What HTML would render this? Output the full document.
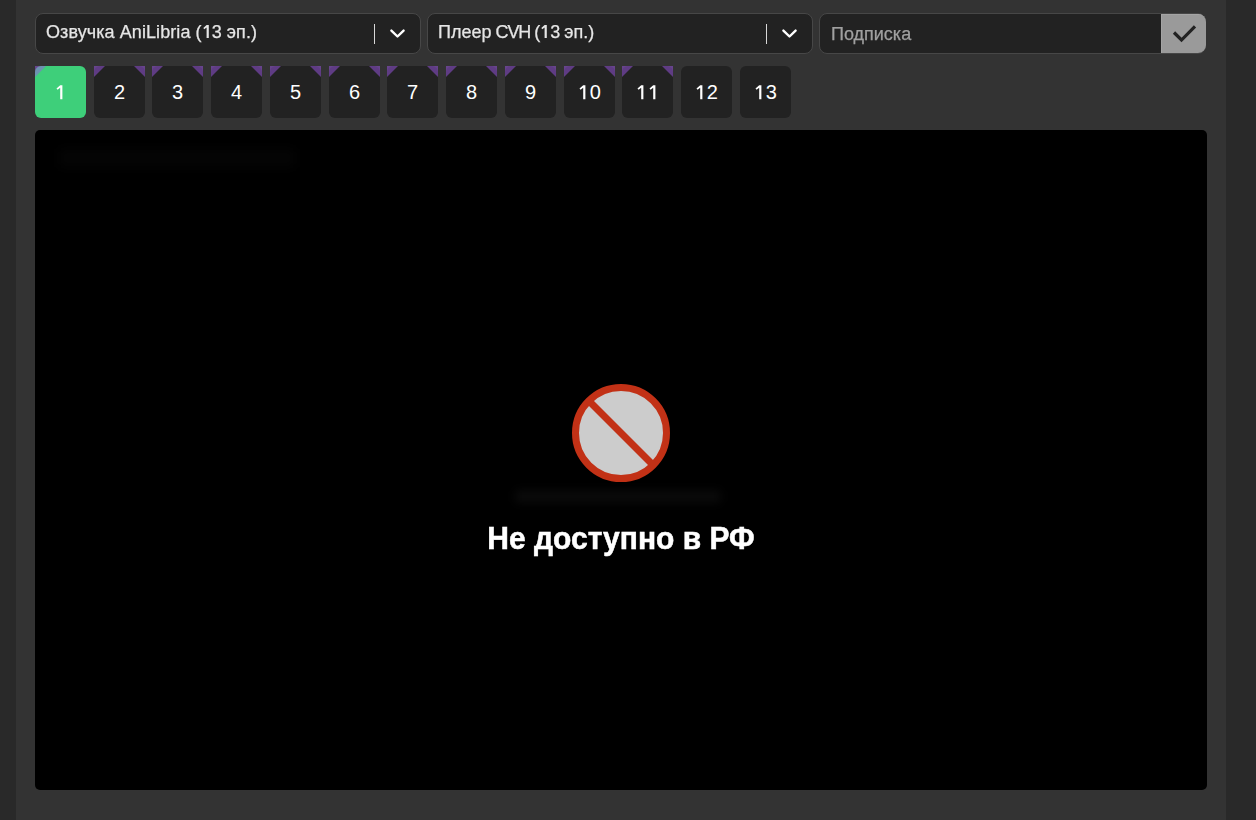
<!DOCTYPE html>
<html><head><meta charset="utf-8">
<style>
html,body{margin:0;padding:0;}
.txt,.ph{will-change:transform;}
.txt,.ph{-webkit-text-stroke:0.25px currentColor;}
body{width:1256px;height:820px;background:#292929;position:relative;overflow:hidden;font-family:"Liberation Sans",sans-serif;}
.panel{position:absolute;left:16px;top:0;width:1210px;height:820px;background:#333333;}
.sel{position:absolute;top:13px;height:41px;box-sizing:border-box;border:1px solid #474747;border-radius:8px;background:#222;}
.sel .txt{position:absolute;left:10px;top:7px;font-size:18px;line-height:22px;color:#e6e6e6;white-space:nowrap;}
.sel .sep{position:absolute;width:1px;top:10px;height:20px;background:#d8d8d8;}
.sel > svg{position:absolute;top:14px;}
.inp{position:absolute;left:819px;top:13px;width:387px;height:41px;box-sizing:border-box;border:1px solid #474747;border-radius:8px;background:#222;}
.inp .ph{position:absolute;left:11px;top:9px;font-size:18px;line-height:22px;color:#a0a0a0;white-space:nowrap;}
.inp .btn{position:absolute;right:-1px;top:0;width:45px;height:39px;background:#9a9a9a;border-radius:0 8px 8px 0;box-shadow:inset 1px 1px 0 #a4a4a4;}
.ep{position:absolute;top:66px;width:51px;height:52px;border-radius:6px;background:#222;color:#fff;font-size:20px;line-height:52px;text-align:center;}
.ep.act{background:#3ecf7a;}
.one{display:inline-block;vertical-align:-0.8px;}
.one18{display:inline-block;vertical-align:0;}
.tl,.tr{position:absolute;top:0;width:0;height:0;}
.tl{left:0;border-top:11px solid rgba(155,85,230,.5);border-right:11px solid transparent;}
.tr{right:0;border-top:11px solid rgba(155,85,230,.5);border-left:11px solid transparent;}
.video{position:absolute;left:35px;top:130px;width:1172px;height:660px;background:#000;border-radius:5px;}
.msg{position:absolute;left:0;width:1172px;top:392px;text-align:center;color:#fff;font-weight:bold;font-size:30px;line-height:34px;transform:scaleY(1.07);transform-origin:50% 27px;-webkit-text-stroke:0.5px #fff;}
</style></head><body>
<div class="panel"></div>

<div class="sel" style="left:35px;width:386px;">
  <div class="txt" style="letter-spacing:0.08px">Озвучка AniLibria (<svg class="one18" width="10" height="13.3" viewBox="0 0 10 13.3"><path d="M4.6 0 L6.8 0 L6.8 13.3 L4.6 13.3 L4.6 2.5 L2.3 4.3 L1.3 3 Z" fill="#e6e6e6"/></svg>3 эп.)</div>
  <div class="sep" style="left:338px"></div>
  <svg style="left:353px" width="17" height="11" viewBox="0 0 17 11"><path d="M2.4 2.6 L8.5 8.5 L14.6 2.6" fill="none" stroke="#fff" stroke-width="2.4" stroke-linecap="round" stroke-linejoin="round"/></svg>
</div>
<div class="sel" style="left:427px;width:386px;">
  <div class="txt" style="word-spacing:-1px">Плеер <span style="letter-spacing:-1.1px">CVH</span> (<svg class="one18" width="10" height="13.3" viewBox="0 0 10 13.3"><path d="M4.6 0 L6.8 0 L6.8 13.3 L4.6 13.3 L4.6 2.5 L2.3 4.3 L1.3 3 Z" fill="#e6e6e6"/></svg>3 эп.)</div>
  <div class="sep" style="left:338px"></div>
  <svg style="left:353px" width="17" height="11" viewBox="0 0 17 11"><path d="M2.4 2.6 L8.5 8.5 L14.6 2.6" fill="none" stroke="#fff" stroke-width="2.4" stroke-linecap="round" stroke-linejoin="round"/></svg>
</div>
<div class="inp">
  <div class="ph">Подписка</div>
  <div class="btn"><svg width="45" height="39" viewBox="0 0 45 39"><path d="M13 18.5 L20.5 26 L34 12.3" fill="none" stroke="#222" stroke-width="3.2"/></svg></div>
</div>

<div class="ep act" style="left:35px"><div class="tl"></div><svg class="one" width="11.4" height="15" viewBox="0 0 11.4 15"><path d="M5.2 0.2 L7.4 0.2 L7.4 14.2 L5.2 14.2 L5.2 2.7 L2.6 4.8 L1.5 3.4 Z" fill="#fff"/></svg></div>
<div class="ep" style="left:94px"><div class="tl"></div><div class="tr"></div>2</div>
<div class="ep" style="left:152px"><div class="tl"></div><div class="tr"></div>3</div>
<div class="ep" style="left:211px"><div class="tl"></div><div class="tr"></div>4</div>
<div class="ep" style="left:270px"><div class="tl"></div><div class="tr"></div>5</div>
<div class="ep" style="left:329px"><div class="tl"></div><div class="tr"></div>6</div>
<div class="ep" style="left:387px"><div class="tl"></div><div class="tr"></div>7</div>
<div class="ep" style="left:446px"><div class="tl"></div><div class="tr"></div>8</div>
<div class="ep" style="left:505px"><div class="tl"></div><div class="tr"></div>9</div>
<div class="ep" style="left:564px"><div class="tl"></div><div class="tr"></div><svg class="one" width="11.4" height="15" viewBox="0 0 11.4 15"><path d="M5.2 0.2 L7.4 0.2 L7.4 14.2 L5.2 14.2 L5.2 2.7 L2.6 4.8 L1.5 3.4 Z" fill="#fff"/></svg>0</div>
<div class="ep" style="left:622px"><div class="tl"></div><div class="tr"></div><svg class="one" width="11.4" height="15" viewBox="0 0 11.4 15"><path d="M5.2 0.2 L7.4 0.2 L7.4 14.2 L5.2 14.2 L5.2 2.7 L2.6 4.8 L1.5 3.4 Z" fill="#fff"/></svg><svg class="one" width="11.4" height="15" viewBox="0 0 11.4 15"><path d="M5.2 0.2 L7.4 0.2 L7.4 14.2 L5.2 14.2 L5.2 2.7 L2.6 4.8 L1.5 3.4 Z" fill="#fff"/></svg></div>
<div class="ep" style="left:681px"><svg class="one" width="11.4" height="15" viewBox="0 0 11.4 15"><path d="M5.2 0.2 L7.4 0.2 L7.4 14.2 L5.2 14.2 L5.2 2.7 L2.6 4.8 L1.5 3.4 Z" fill="#fff"/></svg>2</div>
<div class="ep" style="left:740px"><svg class="one" width="11.4" height="15" viewBox="0 0 11.4 15"><path d="M5.2 0.2 L7.4 0.2 L7.4 14.2 L5.2 14.2 L5.2 2.7 L2.6 4.8 L1.5 3.4 Z" fill="#fff"/></svg>3</div>

<div class="video">
  <svg style="position:absolute;left:536.8px;top:254px" width="98" height="98" viewBox="0 0 98 98">
    <circle cx="49" cy="49" r="45.5" fill="#cccccc" stroke="#c23116" stroke-width="7"/>
    <line x1="17" y1="17" x2="81" y2="81" stroke="#c23116" stroke-width="7"/>
  </svg>
  <div style="position:absolute;left:480px;top:360px;width:206px;height:13px;background:#0a0a0a;filter:blur(4px);border-radius:4px"></div>
  <div style="position:absolute;left:24px;top:18px;width:236px;height:20px;background:#040404;filter:blur(5px);border-radius:4px"></div>
  <div class="msg">Не доступно в РФ</div>
</div>
</body></html>
